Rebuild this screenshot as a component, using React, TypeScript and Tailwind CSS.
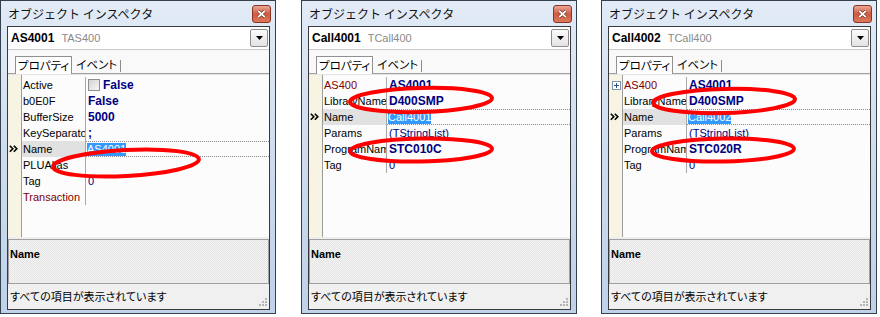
import React from "react";

type Kind = "bold" | "plain" | "sel" | "check" | "none";

interface PropRow {
  name: string;
  value?: string;
  kind?: Kind;
  linked?: boolean;
  expand?: boolean;
  selected?: boolean;
}

interface InspectorProps {
  obj: string;
  cls: string;
  rows: PropRow[];
  className?: string;
}

const latin = "font-['Liberation_Sans',Arial,sans-serif]";
const jp = "font-['Noto_Sans_CJK_JP','Noto_Sans_CJK_SC',sans-serif]";

const as400Rows: PropRow[] = [
  { name: "Active", value: "False", kind: "check" },
  { name: "b0E0F", value: "False", kind: "bold" },
  { name: "BufferSize", value: "5000", kind: "bold" },
  { name: "KeySeparator", value: ";", kind: "bold" },
  { name: "Name", value: "AS4001", kind: "sel", selected: true },
  { name: "PLUAlias", kind: "none" },
  { name: "Tag", value: "0", kind: "plain" },
  { name: "Transaction", kind: "none", linked: true },
];

function callRows(name: string, program: string, expand: boolean): PropRow[] {
  return [
    { name: "AS400", value: "AS4001", kind: "bold", linked: true, expand },
    { name: "LibraryName", value: "D400SMP", kind: "bold" },
    { name: "Name", value: name, kind: "sel", selected: true },
    { name: "Params", value: "(TStringList)", kind: "plain" },
    { name: "ProgramName", value: program, kind: "bold" },
    { name: "Tag", value: "0", kind: "plain" },
  ];
}

function Chevrons() {
  return (
    <svg width="10" height="8" viewBox="0 0 10 8" className="ml-[1px]">
      <path d="M0.8 0.8 L3.8 3.8 L0.8 6.8 M4.8 0.8 L7.8 3.8 L4.8 6.8" fill="none" stroke="#000" strokeWidth="1.6" />
    </svg>
  );
}

function ExpandBox() {
  return (
    <div className="ml-[3px] flex h-[9px] w-[9px] items-center justify-center border border-[#7f93ad] bg-white">
      <svg width="7" height="7" viewBox="0 0 7 7">
        <path d="M1 3.5 H6 M3.5 1 V6" stroke="#2d4f86" strokeWidth="1" />
      </svg>
    </div>
  );
}

function ValueCell({ row }: { row: PropRow }) {
  if (row.kind === "check") {
    return (
      <div className="flex h-full items-center pl-[2px]">
        <div className="mr-[3px] h-[12px] w-[12px] border border-[#8e8f8f] bg-gradient-to-br from-[#d4d4d4] to-[#f7f7f7]" />
        <span className="text-[12px] font-bold text-[#000080]">{row.value}</span>
      </div>
    );
  }
  if (row.kind === "bold") {
    return <div className="pl-[2px] text-[12px] font-bold leading-[16px] text-[#000080]">{row.value}</div>;
  }
  if (row.kind === "plain") {
    return <div className="pl-[2px] text-[11px] leading-[16px] text-[#000080]">{row.value}</div>;
  }
  if (row.kind === "sel") {
    return (
      <div className="flex h-full items-center border-y border-dotted border-[#8a8a8a] pl-[1px]">
        <span className="bg-[#3399ff] text-[11px] leading-[13px] text-white">{row.value}</span>
      </div>
    );
  }
  return null;
}

function Inspector({ obj, cls, rows, className }: InspectorProps) {
  return (
    <div
      className={`flex h-[314px] w-[276px] flex-col border border-[#33414f] bg-gradient-to-b from-[#e2ebf6] via-[#cddcef] to-[#bfd2ea] pb-[3px] pl-[6px] pr-[5px] ${className ?? ""}`}
    >
      {/* Title bar */}
      <div className="flex h-[25px] shrink-0 items-start justify-between">
        <span className={`${jp} mt-[4px] pl-[1px] text-[12px] leading-[17px] text-[#111]`}>オブジェクト インスペクタ</span>
        <div className="mr-[-1px] mt-[4px] flex h-[18px] w-[19px] items-center justify-center rounded-[3px] border border-[#8a3424] bg-gradient-to-b from-[#e9a797] via-[#cf5a40] to-[#dc7a5c]">
          <svg width="9" height="8" viewBox="0 0 9 8">
            <path d="M1.2 1 L7.8 7 M7.8 1 L1.2 7" stroke="#5a1d14" strokeWidth="3" />
            <path d="M1.2 1 L7.8 7 M7.8 1 L1.2 7" stroke="#fff" strokeWidth="1.7" />
          </svg>
        </div>
      </div>

      {/* Client area */}
      <div className={`${latin} flex flex-1 flex-col border border-[#3a3a3a] bg-[#f9f9f9] text-black`}>
        {/* Object selector */}
        <div className="flex h-[23px] shrink-0 items-center border-b border-[#c9c9c9] bg-white">
          <span className="pl-[3px] text-[12px] font-bold">{obj}</span>
          <span className="pl-[7px] text-[11px] text-[#8a8a8a]">{cls}</span>
          <div className="ml-auto mr-[1px] flex h-[18px] w-[18px] items-center justify-center rounded-[2px] border border-[#8f8f8f] bg-gradient-to-b from-[#fbfbfb] to-[#e3e3e3]">
            <svg width="7" height="4" viewBox="0 0 7 4">
              <path d="M0 0 H7 L3.5 4 Z" fill="#000" />
            </svg>
          </div>
        </div>

        {/* Tabs */}
        <div className="flex h-[24px] shrink-0 items-end border-b border-[#a0a0a0] pl-[7px]">
          <div
            className={`${jp} mb-[-1px] flex h-[18px] items-center whitespace-nowrap border-x border-t border-[#919191] bg-white px-[2px] text-[11.5px] leading-[13px] [font-feature-settings:'palt']`}
          >
            プロパティ
          </div>
          <div className={`${jp} flex h-[17px] items-center whitespace-nowrap pl-[4px] text-[11.5px] leading-[13px] [font-feature-settings:'palt']`}>
            イベント
          </div>
          <div className="mb-[1px] ml-[3px] h-[12px] w-px bg-[#8c8c8c]" />
        </div>
        <div className="h-px shrink-0 bg-[#e4e4e4]" />

        {/* Property grid */}
        <div className="flex h-[162px] shrink-0 bg-[#fcfcfc]">
          <div className="w-[13px] bg-[#f7f4e3] pt-[2px]">
            {rows.map((r, i) => (
              <div key={i} className="flex h-[16px] items-center">
                {r.selected && <Chevrons />}
                {r.expand && <ExpandBox />}
              </div>
            ))}
          </div>
          <div className="w-px bg-[#9c9c9c]" />
          <div className="flex-1 pt-[2px]">
            {rows.map((r, i) => (
              <div key={i} className="flex h-[16px]">
                <div
                  className={`w-[63px] overflow-hidden whitespace-nowrap pl-[1px] text-[11px] leading-[16px] ${
                    r.selected ? "bg-[#e1e1e1]" : ""
                  } ${r.linked ? "text-[#800000]" : "text-black"}`}
                >
                  {r.name}
                </div>
                <div className="w-px bg-[#a8a8a8]" />
                <div className="flex-1">
                  <ValueCell row={r} />
                </div>
              </div>
            ))}
          </div>
        </div>
        <div className="h-[2px] shrink-0 bg-[#eeeeee]" />

        {/* Help panel */}
        <div className="h-[45px] shrink-0 border border-[#a0a0a0] bg-[#ececec] bg-[repeating-conic-gradient(#e2e2e2_0_25%,#f6f6f6_0_50%)] bg-size-[2px_2px] pl-[1px] pt-[1px]">
          <span className="text-[11px] font-bold leading-[14px]">Name</span>
        </div>

        {/* Status bar */}
        <div className="flex flex-1 items-center justify-between bg-[#f0f0f0] pl-[2px]">
          <span className={`${jp} text-[11px] [font-feature-settings:'palt']`}>すべての項目が表示されています</span>
          <svg width="10" height="10" viewBox="0 0 10 10" className="mb-[2px] mr-[1px] mt-auto">
            <g fill="#b4b4b4">
              <rect x="7" y="1" width="2" height="2" />
              <rect x="4" y="4" width="2" height="2" />
              <rect x="7" y="4" width="2" height="2" />
              <rect x="1" y="7" width="2" height="2" />
              <rect x="4" y="7" width="2" height="2" />
              <rect x="7" y="7" width="2" height="2" />
            </g>
          </svg>
        </div>
      </div>
    </div>
  );
}

export default function App() {
  return (
    <div className="relative flex h-[317px] w-[880px] items-start overflow-hidden bg-white">
      <Inspector obj="AS4001" cls="TAS400" rows={as400Rows} />
      <Inspector obj="Call4001" cls="TCall400" rows={callRows("Call4001", "STC010C", false)} className="ml-[25px]" />
      <Inspector obj="Call4002" cls="TCall400" rows={callRows("Call4002", "STC020R", true)} className="ml-[24px]" />

      {/* red hand-drawn annotations */}
      <svg className="pointer-events-none absolute inset-0" width="880" height="317" viewBox="0 0 880 317">
        <g fill="none" stroke="#ff0000" strokeWidth="4">
          <ellipse cx="126" cy="163" rx="73" ry="13" transform="rotate(-3 126 163)" />
          <ellipse cx="421" cy="100" rx="71" ry="12" transform="rotate(-1.5 421 100)" />
          <ellipse cx="421" cy="150" rx="71" ry="11.5" transform="rotate(-1 421 150)" />
          <ellipse cx="724" cy="101" rx="71" ry="12" transform="rotate(-1.5 724 101)" />
          <ellipse cx="723" cy="150" rx="71" ry="11.5" transform="rotate(-1 723 150)" />
        </g>
      </svg>
    </div>
  );
}
